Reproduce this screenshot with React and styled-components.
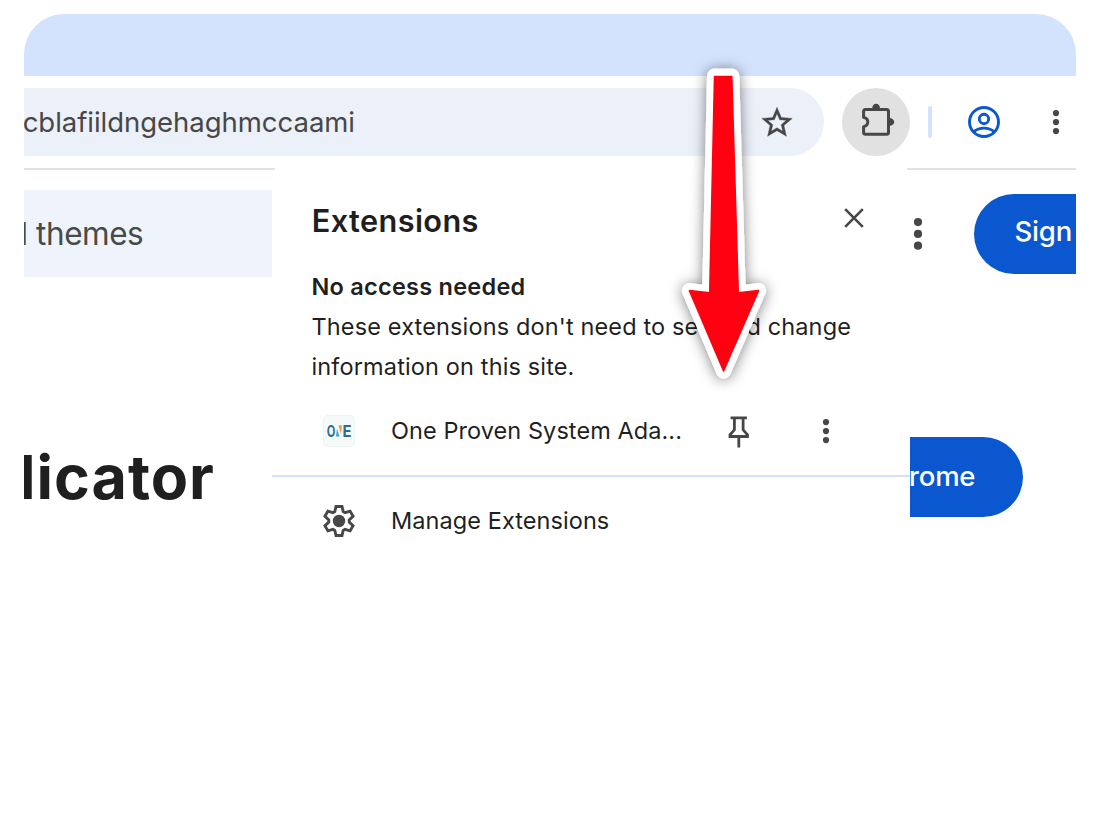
import React from "react";
import styled, { createGlobalStyle } from "styled-components";

const GlobalStyle = createGlobalStyle`
  *, *::before, *::after { box-sizing: border-box; }
  body {
    margin: 0;
    background: #fff;
    color: #1f1f1f;
    font-family: Inter, "Liberation Sans", sans-serif;
  }
  svg { display: block; flex: none; overflow: visible; }
`;

const ink = "#474747";
const blue = "#0b57d0";

const BrowserWindow = styled.main`
  position: relative;
  width: 1052px;
  height: 800px;
  margin: 14px 26px 0 24px;
  border-radius: 40px 40px 0 0;
  overflow: hidden;
`;

const TabStrip = styled.div`
  height: 62px;
  background: #d3e3fd;
`;

const Toolbar = styled.div`
  display: flex;
  align-items: center;
  height: 94px;
  border-bottom: 2px solid #e1e1e1;
`;

const Omnibox = styled.div`
  display: flex;
  align-items: center;
  justify-content: space-between;
  width: 800px;
  height: 68px;
  padding-right: 31px;
  border-radius: 0 34px 34px 0;
  background: #ecf0f9;
`;

const Address = styled.div`
  display: flex;
  justify-content: flex-end;
  width: 331px;
  font-size: 27.5px;
  font-weight: 430;
  line-height: 40px;
  letter-spacing: -0.03px;
  white-space: nowrap;
  color: #474747;
`;

const ExtensionsButton = styled.div`
  display: grid;
  place-items: center;
  width: 68px;
  height: 68px;
  margin: 0 18px;
  border-radius: 50%;
  background: #e1e1e1;
`;

const ToolbarDivider = styled.div`
  width: 4px;
  height: 32px;
  margin-right: 36px;
  border-radius: 2px;
  background: #d3e3fd;
`;

const ToolbarMenu = styled.div`
  margin-left: 52px;
`;

const StoreHeader = styled.header`
  display: flex;
  align-items: flex-start;
  height: 107px;
  padding-top: 20px;
`;

const SearchField = styled.div`
  display: flex;
  flex: none;
  align-items: center;
  width: 260px;
  height: 87px;
  background: #eff3fb;
`;

const SearchText = styled.div`
  display: flex;
  justify-content: flex-end;
  width: 119.3px;
  font-size: 31.5px;
  letter-spacing: -0.45px;
  white-space: nowrap;
  color: #474b4a;
`;

const HeaderMenu = styled.div`
  flex: none;
  margin: 27.5px 52px 0 630px;
`;

const PillButton = styled.div`
  display: flex;
  flex: none;
  align-items: center;
  justify-content: ${(p) => (p.$alignEnd ? "flex-end" : "flex-start")};
  width: ${(p) => p.$width}px;
  height: 80px;
  margin-top: ${(p) => p.$top || 0}px;
  padding: ${(p) => p.$padding};
  border-radius: 40px;
  background: ${blue};
  color: #fff;
  font-size: 27.5px;
  font-weight: 500;
  letter-spacing: ${(p) => p.$tracking || 0}px;
  white-space: nowrap;
`;

const Hero = styled.section`
  display: flex;
  align-items: center;
  justify-content: space-between;
  height: 80px;
  margin: 160px 53px 0 -5px;
`;

const HeroTitle = styled.h1`
  margin: 0;
  font-size: 61px;
  font-weight: 680;
  line-height: 80px;
  letter-spacing: 1px;
`;

const Popup = styled.aside`
  position: absolute;
  top: 148px;
  left: 247.5px;
  width: 638.5px;
  padding: 28.5px 0 20px;
  border-radius: 16px;
  background: #fff;
`;

const PopupHeader = styled.div`
  display: flex;
  align-items: center;
  justify-content: space-between;
  height: 60px;
  padding: 0 45.7px 0 40.2px;
`;

const PopupTitle = styled.h2`
  margin: 0;
  font-size: 30.7px;
  font-weight: 600;
  letter-spacing: 0.4px;
`;

const CloseButton = styled.div`
  margin-bottom: 5px;
`;

const AccessNote = styled.div`
  padding: 16px 0 14px 40px;
  font-size: 23.5px;
  line-height: 40px;
  letter-spacing: 0.14px;
`;

const AccessTitle = styled.div`
  font-weight: 620;
  letter-spacing: 0.25px;
`;

const MenuRow = styled.div`
  display: flex;
  align-items: center;
  height: 60px;
  padding-left: 51.5px;
  font-size: 23.5px;
`;

const RowLabel = styled.div`
  width: 332px;
  margin-left: 36px;
  letter-spacing: 0.07px;
  white-space: nowrap;
`;

const RowMenu = styled.div`
  margin: 1px 0 0 67.3px;
`;

const Separator = styled.div`
  height: 2px;
  margin: 14.5px 0 13.5px;
  background: #d3e3fd;
`;

const Logo = styled.div`
  display: grid;
  place-items: center;
  width: 32px;
  height: 32px;
  border: 1px solid #eef3f4;
  border-radius: 5px;
  background: #f7fafb;
`;

const PointerArrow = styled.svg`
  position: absolute;
  top: 0;
  left: 0;
  pointer-events: none;
`;

const Kebab = ({ r, step }) => (
  <svg width="8" height={step * 2 + r * 2} fill={ink}>
    {[0, 1, 2].map((i) => (
      <circle key={i} cx="4" cy={r + i * step} r={r} />
    ))}
  </svg>
);

const StarIcon = () => (
  <svg width="32" height="32" viewBox="1.5 1.1 21 21" fill={ink} stroke={ink} strokeWidth="0.25">
    <path d="M22 9.24l-7.19-.62L12 2 9.19 8.63 2 9.24l5.46 4.73L5.82 21 12 17.27 18.18 21l-1.63-7.03L22 9.24zM12 15.4l-3.76 2.27 1-4.28-3.32-2.88 4.38-.38L12 6.1l1.71 4.04 4.38.38-3.32 2.88 1 4.28L12 15.4z" />
  </svg>
);

const PuzzleIcon = () => (
  <svg width="34" height="34" viewBox="859 105 34 34">
    <path
      d="M863.6 117.4V111.4Q863.6 109.4 865.6 109.4H886.5Q888.5 109.4 888.5 111.4V132.2Q888.5 134.2 886.5 134.2H865.6Q863.6 134.2 863.6 132.2V126.6C869.2 125.4 869.2 118.6 863.6 117.4Z"
      fill="none"
      stroke={ink}
      strokeWidth="3"
      strokeLinejoin="round"
    />
    <path d="M872.2 108.5a3.9 4.8 0 0 1 7.8 0ZM889.4 118.1a4.8 3.9 0 0 1 0 7.8Z" fill={ink} />
  </svg>
);

const ProfileIcon = () => (
  <svg width="32" height="32" viewBox="0 0 32 32" fill="none" stroke={blue} strokeWidth="2.9">
    <circle cx="16" cy="16" r="14.5" />
    <circle cx="16" cy="13" r="4.7" />
    <path d="M5.8 25.6C11.5 20.9 20.5 20.9 26.2 25.6" />
  </svg>
);

const CloseIcon = () => (
  <svg width="20" height="20" viewBox="0 0 20 20" stroke={ink} strokeWidth="2.6">
    <path d="M1.2 1.2L18.8 18.8M18.8 1.2L1.2 18.8" />
  </svg>
);

const PinIcon = () => (
  <svg width="32" height="32" viewBox="723 415.5 32 32" fill="none" stroke={ink} strokeWidth="2.8">
    <path d="M730.6 418.4H746.9M734.4 418.4V430.3L730 435.3V437H747.5V435.3L743.1 430.3V418.4M738.8 437V448" />
  </svg>
);

const gearTooth = [
  [-4.2, -9.4],
  [-3, -14.5],
  [3, -14.5],
  [4.2, -9.4],
];

const gearPoints = [0, 60, 120, 180, 240, 300]
  .flatMap((deg) => {
    const a = (deg * Math.PI) / 180;
    return gearTooth.map(([x, y]) =>
      [x * Math.cos(a) - y * Math.sin(a), x * Math.sin(a) + y * Math.cos(a)].map((v) => v.toFixed(2)).join(",")
    );
  })
  .join(" ");

const GearIcon = () => (
  <svg width="32" height="32" viewBox="-16 -16 32 32">
    <polygon points={gearPoints} fill="none" stroke={ink} strokeWidth="2.9" />
    <circle r="6.2" fill={ink} />
  </svg>
);

const OneLogo = () => (
  <Logo>
    <svg width="24" height="12" viewBox="0 0 24 12" fontFamily="Inter" fontWeight="700" fontSize="15.5" fill="#2f6d8f">
      <text x="-0.3" y="11.6" textLength="8.6" lengthAdjust="spacingAndGlyphs">O</text>
      <text x="15.4" y="11.6" textLength="9" lengthAdjust="spacingAndGlyphs">E</text>
      <path d="M9 11.5L10 3.5L12.4 11.5Z" fill="#35a3d8" />
      <path d="M11.5 0.3H14.9L13.9 9Z" fill="#ee9a45" />
    </svg>
  </Logo>
);

export default function App() {
  return (
    <>
      <GlobalStyle />
      <BrowserWindow>
        <TabStrip />
        <Toolbar>
          <Omnibox>
            <Address>cblafiildngehaghmccaami</Address>
            <StarIcon />
          </Omnibox>
          <ExtensionsButton>
            <PuzzleIcon />
          </ExtensionsButton>
          <ToolbarDivider />
          <ProfileIcon />
          <ToolbarMenu>
            <Kebab r={3.1} step={9} />
          </ToolbarMenu>
        </Toolbar>

        <StoreHeader>
          <SearchField>
            <SearchText>and themes</SearchText>
          </SearchField>
          <HeaderMenu>
            <Kebab r={4.1} step={11.8} />
          </HeaderMenu>
          <PillButton $width={160} $top={3.7} $padding="0 0 5px 40.5px" $tracking={-0.2}>
            Sign in
          </PillButton>
        </StoreHeader>

        <Hero>
          <HeroTitle>licator</HeroTitle>
          <PillButton $width={280} $padding="0 47.7px 2px 0" $tracking={-0.2} $alignEnd>
            Add to Chrome
          </PillButton>
        </Hero>

        <Popup>
          <PopupHeader>
            <PopupTitle>Extensions</PopupTitle>
            <CloseButton>
              <CloseIcon />
            </CloseButton>
          </PopupHeader>
          <AccessNote>
            <AccessTitle>No access needed</AccessTitle>
            These extensions don't need to see and change
            <br />
            information on this site.
          </AccessNote>
          <MenuRow>
            <OneLogo />
            <RowLabel>One Proven System Ada...</RowLabel>
            <PinIcon />
            <RowMenu>
              <Kebab r={3.1} step={9} />
            </RowMenu>
          </MenuRow>
          <Separator />
          <MenuRow>
            <GearIcon />
            <RowLabel>Manage Extensions</RowLabel>
          </MenuRow>
        </Popup>
      </BrowserWindow>

      <PointerArrow width="1102" height="828" viewBox="0 0 1102 828">
        <defs>
          <filter id="arrow-shadow" x="-50%" y="-20%" width="200%" height="140%">
            <feDropShadow dx="0" dy="1" stdDeviation="7" floodColor="#000" floodOpacity="0.5" />
          </filter>
        </defs>
        <path
          d="M714.5 76H731.8L738.3 293L758.6 290.6L723.6 371L689.4 290.6L709.7 293Z"
          fill="#fff"
          stroke="#fff"
          strokeWidth="15"
          strokeLinejoin="round"
          filter="url(#arrow-shadow)"
        />
        <path
          d="M714.5 76.5H731.8L738.3 292.8L758.6 290.6L723.6 371L689.4 290.6L709.7 292.8Z"
          fill="#ff0010"
          stroke="#ff0010"
          strokeWidth="1.5"
          strokeLinejoin="round"
        />
      </PointerArrow>
    </>
  );
}
